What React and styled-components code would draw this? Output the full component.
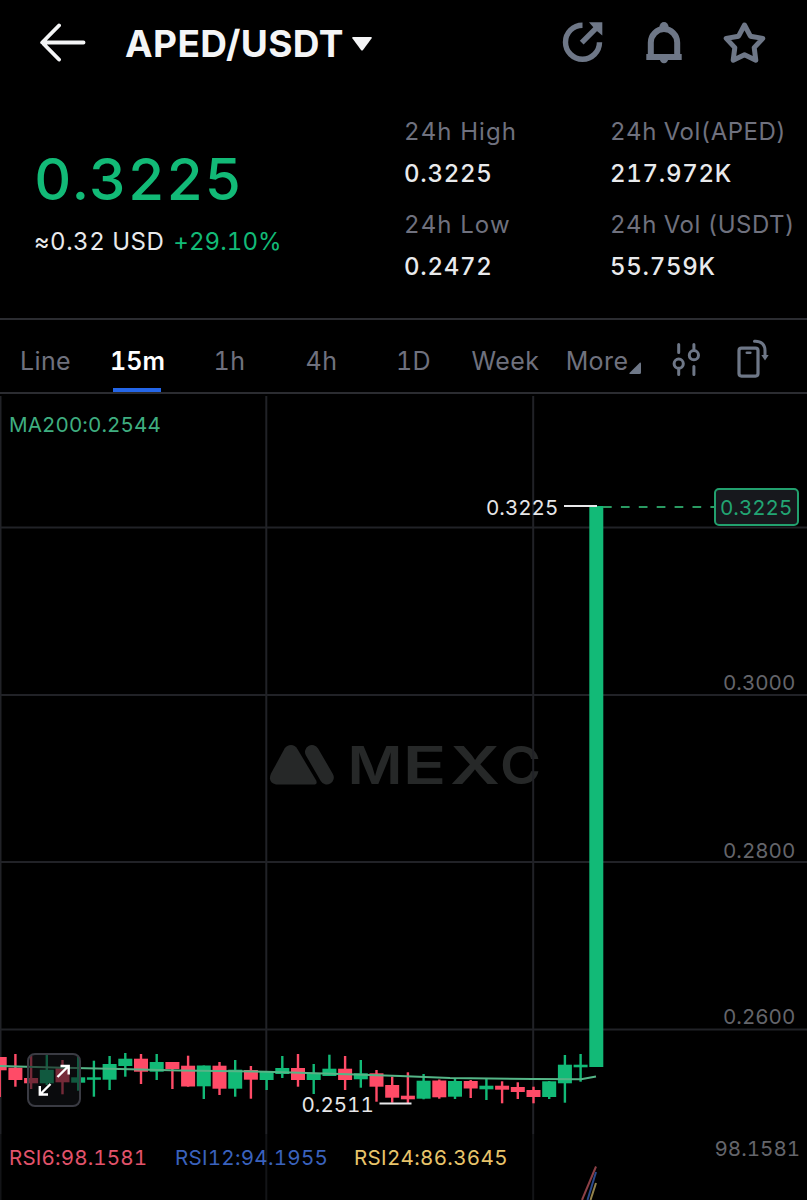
import React from 'react';
import styled, { createGlobalStyle } from 'styled-components';

const GREEN = '#12ba77';
const RED = '#ff4b67';
const MUTED = '#6f717e';
const ICON = '#6e7787';
const GRID = '#212227';

const GlobalStyle = createGlobalStyle`
  * {
    box-sizing: border-box;
  }

  body {
    margin: 0;
    background: #000;
    font-family: Inter, 'Liberation Sans', sans-serif;
    font-variant-numeric: tabular-nums;
  }

  button {
    font: inherit;
    color: inherit;
    background: none;
    border: 0;
    padding: 0;
  }
`;

const Screen = styled.div`
  width: 807px;
  height: 1200px;
  overflow: hidden;
  background: #000;
  color: #e9eaec;
`;

const Header = styled.header`
  display: flex;
  align-items: center;
  height: 86px;
  padding: 0 40.5px 0 38.5px;
`;

const PairButton = styled.button`
  display: flex;
  align-items: center;
  gap: 8px;
  margin: 1px 0 0 39.5px;
  font-size: 37px;
  font-weight: 700;
  line-height: 44px;
  letter-spacing: 0.4px;
  color: #f4f5f6;
`;

const HeaderActions = styled.div`
  display: flex;
  gap: 37px;
  margin-left: auto;
`;

const Icon = styled.svg`
  display: block;
  flex: none;
`;

const Summary = styled.section`
  display: flex;
  height: 232px;
`;

const PriceBlock = styled.div`
  flex: none;
  width: 404px;
  padding: 61px 0 0 34px;
`;

const Price = styled.div`
  font-size: 58px;
  font-weight: 500;
  line-height: 64px;
  letter-spacing: 0.9px;
  color: ${GREEN};
`;

const SubPrice = styled.div`
  display: flex;
  gap: 9px;
  margin-top: 16px;
  font-size: 24px;
  line-height: 30px;
  letter-spacing: 0.5px;
`;

const Change = styled.span`
  letter-spacing: 0.1px;
  color: ${GREEN};
`;

const Stats = styled.dl`
  display: grid;
  grid-template-columns: 206px 197px;
  grid-auto-rows: 92.8px;
  margin: 31px 0 0;
  font-size: 24px;
  line-height: 30px;
`;

const StatLabel = styled.dt`
  white-space: nowrap;
  letter-spacing: ${props => (props.$tight ? '0.5px' : '1.1px')};
  color: ${MUTED};
`;

const StatValue = styled.dd`
  margin: 12px 0 0;
  font-weight: 500;
  letter-spacing: 0.7px;
`;

const Toolbar = styled.nav`
  display: flex;
  align-items: stretch;
  height: 76px;
  border-top: 2px solid #2b2c31;
  border-bottom: 2px solid #2b2c31;
`;

const Tabs = styled.div`
  display: grid;
  grid-template-columns: repeat(6, 92px) 104px;
`;

const Tab = styled.button`
  position: relative;
  display: flex;
  align-items: center;
  justify-content: center;
  padding: 10px 1px 0 0;
  font-size: 25px;
  font-weight: ${props => (props.$active ? 600 : 400)};
  line-height: 30px;
  letter-spacing: ${props => (props.$active ? '0' : '0.4px')};
  color: ${props => (props.$active ? '#ffffff' : MUTED)};

  &::after {
    content: '';
    display: ${props => (props.$active ? 'block' : 'none')};
    position: absolute;
    left: 21px;
    bottom: 0;
    width: 48px;
    height: 4px;
    background: #2466e8;
  }
`;

const MoreMark = styled.svg`
  margin: 14px 0 0 1px;
`;

const ToolbarIcons = styled.div`
  display: flex;
  align-items: center;
  gap: 35px;
  padding: 5px 0 0 15px;
`;

const ChartArea = styled.main`
  position: relative;
  height: 806px;
`;

const ChartSvg = styled.svg`
  display: block;
`;

const ChartText = styled.text`
  font-size: 20.6px;
  letter-spacing: ${props => props.$spacing || 0}px;
  fill: ${props => props.$color || '#e6e6e8'};
`;

const WatermarkText = styled.text`
  font-size: 52px;
  font-weight: 600;
`;

const ExpandButton = styled.button`
  position: absolute;
  left: 27px;
  top: 659px;
  width: 54px;
  height: 54px;
  border: 2px solid #3a3b43;
  border-radius: 8px;
  background: rgba(18, 19, 23, 0.58);
`;

const stats = [
  { label: '24h High', value: '0.3225' },
  { label: '24h Vol(APED)', value: '217.972K', tight: true },
  { label: '24h Low', value: '0.2472' },
  { label: '24h Vol (USDT)', value: '55.759K', tight: true },
];

const tabs = ['Line', '15m', '1h', '4h', '1D', 'Week', 'More'];

// [up, wick top, wick bottom, body top, body bottom]
const candles = [
  [0, 1057, 1097, 1057, 1070.3],
  [0, 1054, 1086.7, 1067.7, 1080],
  [0, 1056, 1089, 1078, 1083.3],
  [1, 1055, 1085, 1069.7, 1083.3],
  [0, 1060, 1094.3, 1068.3, 1082.3],
  [1, 1057, 1090.7, 1077.3, 1082.7],
  [1, 1060.7, 1096.7, 1077.3, 1079.8],
  [1, 1056, 1090, 1064, 1079.7],
  [1, 1053, 1076.7, 1058.7, 1066],
  [0, 1054, 1084, 1058.7, 1071.7],
  [1, 1054, 1080, 1062, 1071.7],
  [0, 1062, 1089, 1062, 1069],
  [0, 1055.7, 1086.7, 1065.7, 1086.5],
  [1, 1065.5, 1099, 1065.5, 1086.3],
  [0, 1062, 1095, 1065.7, 1088.7],
  [1, 1060, 1096.7, 1069.7, 1088.7],
  [0, 1066, 1098.7, 1070, 1079.7],
  [1, 1071.5, 1090, 1071.5, 1080],
  [1, 1056, 1078, 1068, 1074],
  [0, 1054, 1086.7, 1068, 1080],
  [1, 1064, 1094, 1073.3, 1080],
  [1, 1054.7, 1076, 1068.7, 1076],
  [0, 1056, 1090, 1068.7, 1080],
  [1, 1060, 1087.7, 1073.3, 1079.3],
  [0, 1070, 1101.7, 1073.3, 1086.7],
  [0, 1076.7, 1102.7, 1085, 1097.7],
  [0, 1072.3, 1103, 1095.7, 1099.3],
  [1, 1074, 1099.3, 1080.7, 1098.7],
  [0, 1079.5, 1098.7, 1080.5, 1097.3],
  [1, 1079, 1099, 1081, 1096.7],
  [0, 1080, 1098, 1081, 1088.5],
  [1, 1078.5, 1100, 1085.7, 1089.3],
  [0, 1081.3, 1103.3, 1085.7, 1089.7],
  [0, 1082.3, 1099, 1087, 1092],
  [0, 1086.7, 1103.3, 1090, 1097],
  [1, 1081, 1099, 1081.3, 1097],
  [1, 1055, 1102.7, 1064.7, 1083.3],
  [1, 1054, 1081.7, 1064.7, 1067.3],
  [1, 506, 1067, 506, 1067],
];

const STEP = 15.7;

const Candle = ({ index, data }) => {
  const [up, high, low, top, bottom] = data;
  const x = index * STEP - 0.3;
  return (
    <g fill={up ? GREEN : RED}>
      <rect x={x - 1.2} y={high} width="2.4" height={low - high} />
      <rect x={x - 7} y={top} width="14" height={bottom - top} />
    </g>
  );
};

const Watermark = () => (
  <g fill="#262828">
    <path d="M284.6 748.6Q287 745 291 745Q295 745 297.4 749L316.2 780.6Q317.8 784.4 313.5 784.4L276 784.4Q267.4 782.6 271 773.6Z" />
    <path d="M312 752L326.8 777.4" stroke="#262828" strokeWidth="14" strokeLinecap="round" />
    <WatermarkText y="783.6">
      <tspan x="347.5" textLength="55" lengthAdjust="spacingAndGlyphs">M</tspan>
      <tspan x="402.5" textLength="44" lengthAdjust="spacingAndGlyphs">E</tspan>
      <tspan x="450" textLength="50" lengthAdjust="spacingAndGlyphs">X</tspan>
      <tspan x="500" textLength="41" lengthAdjust="spacingAndGlyphs">C</tspan>
    </WatermarkText>
  </g>
);

const Chart = () => (
  <ChartSvg width="807" height="806" viewBox="0 394 807 806">
    <Watermark />
    <g stroke={GRID} strokeWidth="2">
      <path d="M0 527.6H807M0 695H807M0 862H807M0 1029.6H807" />
      <path d="M0.5 396V1134M266.3 396V1134M533.2 396V1134" />
      <path d="M0.5 1134V1200M266.3 1134V1200M533.2 1134V1200" opacity="0.6" />
    </g>

    {candles.map((data, i) => (
      <Candle key={i} index={i} data={data} />
    ))}

    <polyline
      points="0,1066 53,1067.5 120,1069 180,1070.5 266,1071.7 340,1074 400,1076 450,1078 533,1079 581,1079.3 596,1076.5"
      fill="none"
      stroke="#55b587"
      strokeWidth="2"
    />

    {/* last price */}
    <path d="M603 507H714" stroke="#2a9a62" strokeWidth="1.8" strokeDasharray="8.7 9.2" />
    <path d="M564 506H597" stroke="#e8e8ea" strokeWidth="2" />
    <ChartText x="486" y="514.5">0.3225</ChartText>
    <rect x="715" y="489" width="83" height="36" rx="4" fill="#17181d" stroke="#22a06e" strokeWidth="2" />
    <ChartText x="720" y="515" $color="#22a573">0.3225</ChartText>

    {/* period low */}
    <path d="M379.5 1103.5H411.5" stroke="#e8e8ea" strokeWidth="2" />
    <ChartText x="301.5" y="1111.7">0.2511</ChartText>

    <ChartText x="723" y="690.2" $color="#64656b">0.3000</ChartText>
    <ChartText x="723" y="857.5" $color="#64656b">0.2800</ChartText>
    <ChartText x="723" y="1024.3" $color="#64656b">0.2600</ChartText>
    <ChartText x="714.5" y="1156" $color="#64656b">98.1581</ChartText>

    <ChartText x="9" y="432.3" $spacing={0.1} $color="#3fae80">MA200:0.2544</ChartText>
    <ChartText x="9" y="1165" $spacing={0.15} $color="#e2536b">RSI6:98.1581</ChartText>
    <ChartText x="175" y="1165" $spacing={0.25} $color="#3a62bd">RSI12:94.1955</ChartText>
    <ChartText x="354" y="1165" $spacing={0.3} $color="#e8c46a">RSI24:86.3645</ChartText>

    <g fill="none" strokeWidth="2">
      <path d="M582 1200L596 1166.5" stroke="#8c4046" />
      <path d="M587.5 1200L596 1172" stroke="#2a4a8c" />
      <path d="M590.5 1200L596 1183" stroke="#94834c" />
    </g>
  </ChartSvg>
);

const App = () => (
  <>
    <GlobalStyle />
    <Screen>
      <Header>
        <Icon width="47" height="40" viewBox="39 23 47 40" fill="none" stroke="#f4f5f6" strokeWidth="3.9" strokeLinecap="round" strokeLinejoin="round">
          <path d="M59 25.5L42.2 42.5L59 59.5M42.5 42.5H83.5" />
        </Icon>
        <PairButton>
          APED/USDT
          <Icon width="20" height="14" viewBox="0 0 20 14" fill="#f4f5f6">
            <path d="M1 0H19Q20.3 0.3 19.5 1.5L11 13Q10 14 9 13L0.5 1.5Q-0.3 0.3 1 0Z" />
          </Icon>
        </PairButton>
        <HeaderActions>
          <Icon width="44" height="44" viewBox="561 21 44 44" fill="none" stroke={ICON} strokeWidth="5.4">
            <path d="M582.5 25.2A17 17 0 1 0 599.5 42.2" />
            <path d="M581.7 42.7L597 27.4" />
            <path d="M589 22.3H602.3V35.6L597.5 31.5L594 28Z" fill={ICON} stroke="none" />
          </Icon>
          <Icon width="44" height="44" viewBox="641.7 21 44 44" fill={ICON}>
            <circle cx="663.7" cy="26.6" r="4.5" />
            <circle cx="663.7" cy="59" r="4.2" />
            <rect x="646" y="54" width="35.4" height="6" />
            <path d="M650.5 56V42.5A13.2 13.4 0 0 1 676.9 42.5V56" fill="none" stroke={ICON} strokeWidth="6" />
          </Icon>
          <Icon width="44" height="44" viewBox="723 21 44 44" fill="none" stroke={ICON} strokeWidth="5" strokeLinejoin="round">
            <path d="M744.5 25L750.4 36.2L762.8 38.4L754.2 47.6L755.8 60.2L744.5 54.7L733.2 60.2L734.8 47.6L726.2 38.4L738.6 36.2Z" />
          </Icon>
        </HeaderActions>
      </Header>

      <Summary>
        <PriceBlock>
          <Price>0.3225</Price>
          <SubPrice>
            <span>≈0.32 USD</span>
            <Change>+29.10%</Change>
          </SubPrice>
        </PriceBlock>
        <Stats>
          {stats.map(({ label, value, tight }) => (
            <div key={label}>
              <StatLabel $tight={tight}>{label}</StatLabel>
              <StatValue>{value}</StatValue>
            </div>
          ))}
        </Stats>
      </Summary>

      <Toolbar>
        <Tabs>
          {tabs.map(name => (
            <Tab key={name} $active={name === '15m'}>
              {name}
              {name === 'More' && (
                <MoreMark width="12" height="12" viewBox="0 0 12 12" fill={ICON}>
                  <path d="M11 0.5Q12 0.3 12 1.5V10.5Q12 12 10.5 12H1.2Q-0.3 11.8 0.7 10.8Z" />
                </MoreMark>
              )}
            </Tab>
          ))}
        </Tabs>
        <ToolbarIcons>
          <Icon width="30" height="36" viewBox="671 342 30 36" fill="none" stroke={ICON} strokeWidth="3" strokeLinecap="round">
            <path d="M678.7 345.5V353.5M678.7 370V375.5M693.9 345.5V350M693.9 367.5V375.5" />
            <circle cx="678.7" cy="364.7" r="4.6" />
            <circle cx="693.9" cy="356.2" r="4.6" />
          </Icon>
          <Icon width="34" height="40" viewBox="736 339.5 34 40" fill="none" stroke={ICON} strokeWidth="3.2" strokeLinecap="round">
            <rect x="739" y="348.6" width="19" height="28" rx="2.5" />
            <path d="M746.8 353.2H750.3" strokeWidth="2.6" />
            <path d="M754.5 341.8C761.5 341.4 765 345.5 765 351V357" strokeWidth="3" />
            <path d="M761.3 355.5H768.7L765 361Z" fill={ICON} stroke="none" />
          </Icon>
        </ToolbarIcons>
      </Toolbar>

      <ChartArea>
        <Chart />
        <ExpandButton aria-label="Full screen">
          <Icon width="50" height="50" viewBox="29 1055 50 50" fill="none" stroke="#fff" strokeWidth="2.4">
            <path d="M57.5 1077L68.5 1066M60.5 1066H68.7V1074.5" />
            <path d="M50.5 1084L40 1094.5M39.8 1086V1094.5H48" />
          </Icon>
        </ExpandButton>
      </ChartArea>
    </Screen>
  </>
);

export default App;
